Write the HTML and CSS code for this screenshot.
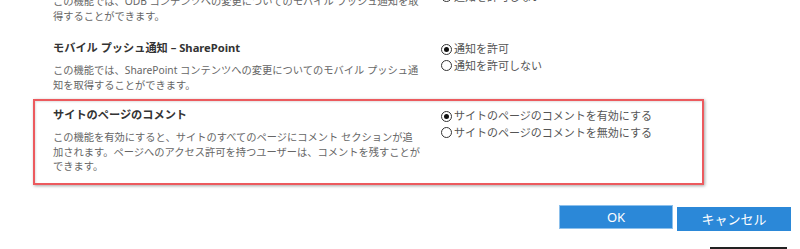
FILE: index.html
```html
<!DOCTYPE html>
<html lang="ja">
<head>
<meta charset="utf-8">
<link rel="stylesheet" href="styles.css">
</head>
<body>
<div class="page">
  <div class="section section--first">
    <div class="info">
      <div class="title">モバイル プッシュ通知 – OneDrive</div>
      <div class="desc">この機能では、ODB コンテンツへの変更についてのモバイル プッシュ通知を取得することができます。</div>
    </div>
    <div class="options">
      <label class="opt"><span class="radio radio--on"></span>通知を許可</label>
      <label class="opt"><span class="radio"></span>通知を許可しない</label>
    </div>
  </div>
  <div class="section">
    <div class="info">
      <div class="title">モバイル プッシュ通知 – SharePoint</div>
      <div class="desc">この機能では、SharePoint コンテンツへの変更についてのモバイル プッシュ通知を取得することができます。</div>
    </div>
    <div class="options">
      <label class="opt"><span class="radio radio--on"></span>通知を許可</label>
      <label class="opt"><span class="radio"></span>通知を許可しない</label>
    </div>
  </div>
  <div class="section section--highlight">
    <div class="info">
      <div class="title">サイトのページのコメント</div>
      <div class="desc">この機能を有効にすると、サイトのすべてのページにコメント セクションが追加されます。ページへのアクセス許可を持つユーザーは、コメントを残すことができます。</div>
    </div>
    <div class="options">
      <label class="opt"><span class="radio radio--on"></span>サイトのページのコメントを有効にする</label>
      <label class="opt"><span class="radio"></span>サイトのページのコメントを無効にする</label>
    </div>
  </div>
  <div class="actions">
    <button class="btn btn--ok">OK</button>
    <button class="btn btn--cancel">キャンセル</button>
  </div>
  <div class="footer-bar"></div>
</div>
</body>
</html>
```

FILE: styles.css
```css
html, body {
  margin: 0;
  padding: 0;
  background: #ffffff;
  overflow: hidden;
}
body {
  font-family: "Noto Sans", "Noto Sans CJK JP", sans-serif;
  color: #444;
}
.page {
  margin-top: -37px;
  width: 800px;
}
.section {
  margin-left: 33px;
  width: 671px;
  box-sizing: border-box;
  display: grid;
  grid-template-columns: 369px 1fr;
  column-gap: 19px;
  padding: 6px 18px 5px 18px;
  border: 2px solid transparent;
}
.section--first {
  padding-bottom: 7px;
}
.section--highlight {
  border-color: #ec5a5e;
  box-shadow: 1px 1px 3px rgba(0, 0, 0, 0.35), inset 1px 1px 2px rgba(0, 0, 0, 0.12);
  padding-bottom: 9px;
}
.title {
  font-size: 11.2px;
  line-height: 16px;
  font-weight: bold;
  color: #333;
  margin-bottom: 7px;
}
.desc {
  font-size: 10.25px;
  line-height: 14.5px;
  color: #666;
  line-break: anywhere;
}
.options {
  display: flex;
  flex-direction: column;
  padding-top: 1px;
}
.opt {
  display: flex;
  align-items: center;
  font-size: 11px;
  line-height: 16.5px;
  color: #555;
}
.radio {
  width: 11px;
  height: 11px;
  box-sizing: border-box;
  border: 1px solid #333;
  border-radius: 50%;
  margin-right: 2px;
  display: flex;
  align-items: center;
  justify-content: center;
  flex-shrink: 0;
}
.radio--on::after {
  content: "";
  width: 5px;
  height: 5px;
  border-radius: 50%;
  background: #111;
}
.actions {
  display: flex;
  justify-content: flex-end;
  align-items: flex-start;
  gap: 4px;
  padding-right: 9px;
  margin-top: 20px;
}
.btn {
  width: 114px;
  height: 24px;
  box-sizing: border-box;
  border: 1px solid #2b88d8;
  background: #2b88d8;
  color: #fff;
  font-family: "Noto Sans", "Noto Sans CJK JP", sans-serif;
  font-size: 13px;
  padding: 0;
  cursor: pointer;
}
.btn--ok {
  border-color: #8cc0ec;
}
.btn--cancel {
  margin-top: 2px;
}
.footer-bar {
  margin: 16px 13px 0 auto;
  width: 77px;
  height: 10px;
  background: #222;
}
```
